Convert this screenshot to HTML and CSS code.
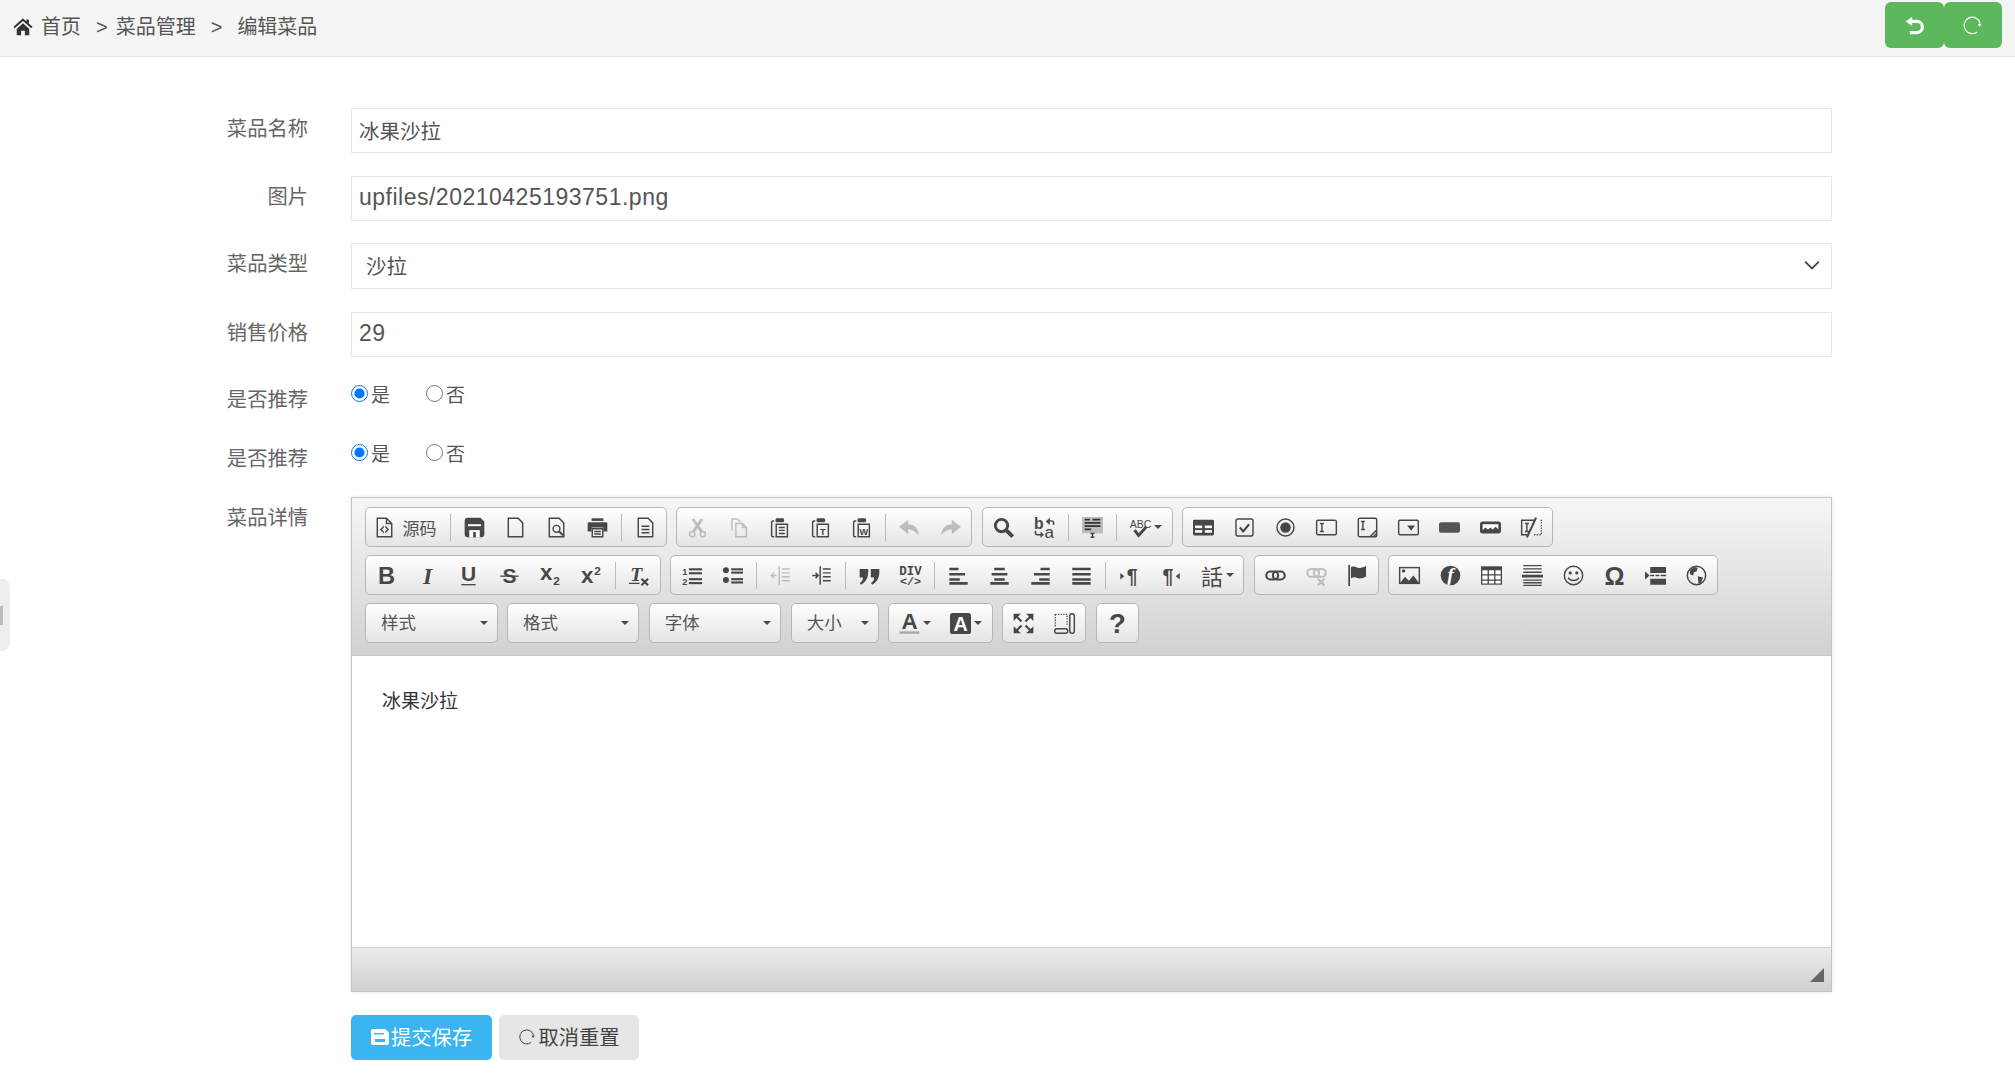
FILE: index.html
```html
<!DOCTYPE html>
<html lang="zh-CN">
<head>
<meta charset="utf-8">
<title>编辑菜品</title>
<link rel="stylesheet" href="styles.css">
</head>
<body>
<header class="topbar">
  <nav class="crumbs">
    <svg class="home" viewBox="0 0 16 16"><path d="M8 1L.4 7.800l1 1.100L8 3.100l6.600 5.800 1-1.100-2.900-2.600V2h-2v1.500z"/><path d="M3 9.400L8 5l5 4.400v5.100H9.500v-3.600h-3v3.600H3z"/></svg>
    <span class="c1">首页</span><span class="c2">&gt;</span><span class="c3">菜品管理</span><span class="c2">&gt;</span><span class="c2">编辑菜品</span>
  </nav>
  <div class="topbtns">
    <button class="gbtn" type="button"><svg class="gico" viewBox="0 0 18 18"><path d="M7 1.500L1.500 5.500 7 9.500z"/><path class="ws" d="M5 5.500h6a4.800 4.800 0 010 9.600H5"/></svg></button>
    <button class="gbtn" type="button"><svg class="gico" viewBox="0 0 18 18"><path class="wt" d="M15.500 7A7 7 0 1013 14.500"/><path d="M13.500 7.500h3.500L15 10z"/></svg></button>
  </div>
</header>

<button class="handle" type="button" aria-label="toggle"></button>

<form class="form">
  <div class="row"><label class="lab">菜品名称</label><div class="field"><input class="inp" value="冰果沙拉"></div></div>
  <div class="row"><label class="lab">图片</label><div class="field"><input class="inp latin" value="upfiles/20210425193751.png"></div></div>
  <div class="row"><label class="lab">菜品类型</label><div class="field selwrap"><select class="inp sel"><option>沙拉</option></select><svg class="chev" viewBox="0 0 14 8"><path d="M1 1l6 6 6-6"/></svg></div></div>
  <div class="row"><label class="lab">销售价格</label><div class="field"><input class="inp latin" value="29"></div></div>
  <div class="row radio-row"><label class="lab">是否推荐</label><div class="field radios"><label class="rad"><input type="radio" name="a" checked>是</label><label class="rad"><input type="radio" name="a">否</label></div></div>
  <div class="row radio-row"><label class="lab">是否推荐</label><div class="field radios"><label class="rad"><input type="radio" name="b" checked>是</label><label class="rad"><input type="radio" name="b">否</label></div></div>
  <div class="row"><label class="lab">菜品详情</label>
    <div class="field editor">
      <div class="tools">
        <div class="trow">
          <div class="grp">
            <span class="b srcb"><svg class="ico" viewBox="0 0 16 16"><path class="s" d="M2.500 1h7l4 4v10h-11zM9.500 1v4h4"/><path d="M7.500 6.500L4.500 9.500l3 3v-1.500L6 9.500 7.500 8zm1 0v1.500L10 9.500 8.500 11v1.500l3-3z"/></svg><span class="blabel">源码</span></span>
            <i class="sep"></i>
            <span class="b"><svg class="ico" viewBox="0 0 16 16"><path d="M2.500 .5h10L15.500 3.500V13a2.500 2.500 0 01-2.500 2.500H3A2.500 2.500 0 01.5 13V3A2.500 2.500 0 013 .5z"/><rect class="w" x="3" y="5.500" width="10" height="1.500"/><rect class="w" x="4" y="10" width="8" height="5.500"/><rect x="7" y="11.500" width="2" height="4"/></svg></span>
            <span class="b"><svg class="ico" viewBox="0 0 16 16"><path class="s" d="M2.500 1h7.500l3.500 3.500V15h-11z"/></svg></span>
            <span class="b"><svg class="ico" viewBox="0 0 16 16"><path class="s" d="M2.500 1h7.500l3.500 3.500V15h-11z"/><circle class="s" cx="8" cy="9" r="2.600"/><path class="s2" d="M10 11l3 3"/></svg></span>
            <span class="b"><svg class="ico" viewBox="0 0 16 16"><rect x="3.500" y="1" width="9" height="2"/><path d="M1.500 4h13a1 1 0 011 1v6h-3V8h-9v3h-3V5a1 1 0 011-1z"/><path class="s" d="M4 9h8v6H4zM5.500 11h5M5.500 13h5"/></svg></span>
            <i class="sep"></i>
            <span class="b"><svg class="ico" viewBox="0 0 16 16"><path class="s" d="M2.500 1h7.500l3.500 3.500V15h-11zM5 7h6M5 9.500h6M5 12h6"/></svg></span>
          </div>
          <div class="grp">
            <span class="b dis"><svg class="ico" viewBox="0 0 16 16"><circle class="s" cx="4" cy="13" r="2"/><circle class="s" cx="12" cy="13" r="2"/><path class="s3" d="M5 11L11.500 1.500M11 11L4.500 1.500"/></svg></span>
            <span class="b dis"><svg class="ico" viewBox="0 0 16 16"><path class="s" d="M3 10.500V1.500h4l2.500 2.500M6 5h5l3 3v7H6zM11 5v3h3"/></svg></span>
            <span class="b"><svg class="ico" viewBox="0 0 16 16"><path class="s" d="M4 3H3a1 1 0 00-1 1v10a1 1 0 001 1h1M5.500 5.500h8.500V15H5.500zM7.500 8h4.500M7.500 10.200h4.500M7.500 12.500h4.500"/><rect x="5" y="1" width="6.500" height="3" rx="1"/></svg></span>
            <span class="b"><svg class="ico" viewBox="0 0 16 16"><path class="s" d="M4 3H3a1 1 0 00-1 1v10a1 1 0 001 1h1M5.500 5.500h8.500V15H5.500z"/><rect x="5" y="1" width="6.500" height="3" rx="1"/><text x="9.700" y="13.500" class="t7">T</text></svg></span>
            <span class="b"><svg class="ico" viewBox="0 0 16 16"><path class="s" d="M4 3H3a1 1 0 00-1 1v10a1 1 0 001 1h1M5.500 5.500h8.500V15H5.500z"/><rect x="5" y="1" width="6.500" height="3" rx="1"/><text x="9.700" y="13.500" class="t7">W</text></svg></span>
            <i class="sep"></i>
            <span class="b dis"><svg class="ico" viewBox="0 0 16 16"><path d="M7 2L0 7.500 7 13V9.500c3 0 5.500 1 8 4.500C15 9 11.500 5.500 7 5.500z"/></svg></span>
            <span class="b dis"><svg class="ico" viewBox="0 0 16 16"><path d="M9 2l7 5.500L9 13V9.500c-3 0-5.500 1-8 4.500C1 9 4.500 5.500 9 5.500z"/></svg></span>
          </div>
          <div class="grp">
            <span class="b"><svg class="ico" viewBox="0 0 16 16"><circle class="s3" cx="6.500" cy="6.500" r="4.700"/><path class="s4" d="M10 10l5 5"/></svg></span>
            <span class="b"><svg class="ico" viewBox="0 0 16 16"><text x="0" y="9" class="t9">b</text><text x="8" y="16" class="t10">a</text><path d="M9 3.500L12 .5V2.500h1.500a2 2 0 012 2V6h-1.200V4.500a1 1 0 00-1-1H12v2.500zM.5 10.500h1.200V12a1 1 0 001 1H5v-2l2.500 2.500L5 16v-2H2.500a2 2 0 01-2-2z"/></svg></span>
            <i class="sep"></i>
            <span class="b"><svg class="ico" viewBox="0 0 16 16"><rect class="gray" x="0" y="0" width="16" height="12.500"/><path class="s4b" d="M2 2h4M2 4.500h12M2 7h12M2 9.500h5M8 2h6"/><path class="s" d="M6.500 12.500h3M8 12.500v3M6.500 15.500h3"/></svg></span>
            <i class="sep"></i>
            <span class="b wide"><svg class="ico" viewBox="0 0 16 16"><text x="8" y="8" class="t7m">ABC</text><path class="s3" d="M3.500 10l3 4L12.500 7.500"/></svg><i class="arr"></i></span>
          </div>
          <div class="grp">
            <span class="b"><svg class="ico" viewBox="0 0 16 16"><rect x="0" y="2" width="16" height="12" rx="1"/><rect class="w" x="1.500" y="6.500" width="5.500" height="2"/><rect class="w" x="9" y="6.500" width="5.500" height="2"/><rect class="w" x="1.500" y="10" width="5.500" height="2"/><rect class="w" x="9" y="10" width="5.500" height="2"/></svg></span>
            <span class="b"><svg class="ico" viewBox="0 0 16 16"><rect class="s" x="1.500" y="1.500" width="13" height="13" rx="1.500"/><path class="s2" d="M4.500 8l2.500 3 4.500-5.500"/></svg></span>
            <span class="b"><svg class="ico" viewBox="0 0 16 16"><circle class="s" cx="8" cy="8" r="6.500"/><circle cx="8" cy="8" r="4"/></svg></span>
            <span class="b"><svg class="ico" viewBox="0 0 16 16"><rect class="s" x=".5" y="2.500" width="15" height="11" rx="1"/><path class="s" d="M3 5h3M4.500 5v6M3 11h3"/></svg></span>
            <span class="b"><svg class="ico" viewBox="0 0 16 16"><rect class="s" x="1" y="1" width="14" height="14" rx="1"/><path class="s" d="M3 3.500h3M4.500 3.500v6M3 9.500h3M15 10l-5 5M15 12.500L12.500 15"/></svg></span>
            <span class="b"><svg class="ico" viewBox="0 0 16 16"><rect class="s" x=".5" y="2.500" width="15" height="11" rx="1"/><path d="M7 6.500h6L10 10.500z"/></svg></span>
            <span class="b"><svg class="ico" viewBox="0 0 16 16"><rect class="mid" x="0" y="4" width="16" height="8" rx="1.500"/></svg></span>
            <span class="b"><svg class="ico" viewBox="0 0 16 16"><rect x="0" y="3.500" width="16" height="9" rx="2"/><path class="w" d="M2 5.500h12v4l-2-2-2.500 2-1.500-1.500-2 1.500L4 8 2 10z"/></svg></span>
            <span class="b"><svg class="ico" viewBox="0 0 16 16"><path class="s" d="M10 2.500H.5v11h5M3 5h3M4.500 5v6M3 11h3"/><path class="s2" d="M11.500 .5L4.500 15.500"/><path class="dot" d="M15.500 2v11.500H10"/></svg></span>
          </div>
        </div>
        <div class="trow">
          <div class="grp">
            <span class="b"><svg class="ico" viewBox="0 0 16 16"><text x="8" y="14.500" class="tb">B</text></svg></span>
            <span class="b"><svg class="ico" viewBox="0 0 16 16"><text x="8" y="14.500" class="ti">I</text></svg></span>
            <span class="b"><svg class="ico" viewBox="0 0 16 16"><text x="8" y="12.500" class="tu">U</text><rect x="2.500" y="14.500" width="11" height="1"/></svg></span>
            <span class="b"><svg class="ico" viewBox="0 0 16 16"><text x="8" y="14" class="tu">S</text><rect x="1" y="8" width="14" height="1"/></svg></span>
            <span class="b"><svg class="ico" viewBox="0 0 16 16"><text x="0" y="11.500" class="tx">x</text><text x="10" y="15.500" class="t6">2</text></svg></span>
            <span class="b"><svg class="ico" viewBox="0 0 16 16"><text x="0" y="14" class="tx">x</text><text x="10" y="7.500" class="t6">2</text></svg></span>
            <i class="sep"></i>
            <span class="b"><svg class="ico" viewBox="0 0 16 16"><text x="1" y="12" class="tt">T</text><rect x="0" y="13.500" width="8" height="1"/><path class="s2" d="M9.500 10.500l5 5M14.500 10.500l-5 5"/></svg></span>
          </div>
          <div class="grp">
            <span class="b"><svg class="ico" viewBox="0 0 16 16"><text x="1" y="7.500" class="t6s">1</text><text x="1" y="15" class="t6s">2</text><rect x="6" y="2.500" width="10" height="1.600"/><rect x="6" y="5.500" width="10" height="1.600"/><rect x="6" y="10" width="10" height="1.600"/><rect x="6" y="13" width="10" height="1.600"/></svg></span>
            <span class="b"><svg class="ico" viewBox="0 0 16 16"><circle cx="3" cy="4" r="2.300"/><circle cx="3" cy="11.500" r="2.300"/><rect x="7" y="2.500" width="9" height="1.600"/><rect x="7" y="5" width="9" height="1.600"/><rect x="7" y="10" width="9" height="1.600"/><rect x="7" y="12.500" width="9" height="1.600"/></svg></span>
            <i class="sep"></i>
            <span class="b dis"><svg class="ico" viewBox="0 0 16 16"><path class="s" d="M7 1v14M9 3h6M9 6h6M9 9h6M9 12h6M5 8H1M3 6L1 8l2 2"/></svg></span>
            <span class="b"><svg class="ico" viewBox="0 0 16 16"><path class="s" d="M7 1v14M9 3h6M9 6h6M9 9h6M9 12h6M1 8h4M3.500 6l2 2-2 2"/></svg></span>
            <i class="sep"></i>
            <span class="b"><svg class="ico" viewBox="0 0 16 16"><path d="M7 5.500c0 4.500-2 7.500-5.500 9.500l-.8-1.200C2.500 12.500 3 11 3 9.500H.5V3H7zM15.500 5.500c0 4.500-2 7.500-5.500 9.500l-.8-1.200c1.800-1.300 2.300-2.800 2.300-4.300H9V3h6.500z"/></svg></span>
            <span class="b"><svg class="ico" viewBox="0 0 16 16"><text x="8" y="7.500" class="tm7">DIV</text><text x="8" y="15.500" class="tm7b">&lt;/&gt;</text></svg></span>
            <i class="sep"></i>
            <span class="b"><svg class="ico" viewBox="0 0 16 16"><path d="M1 2h7v2H1zM1 6h12v2H1zM1 10h8v2H1zM1 13h14v2H1z"/></svg></span>
            <span class="b"><svg class="ico" viewBox="0 0 16 16"><path d="M4 2h8v2H4zM2 6h12v2H2zM4 10h8v2H4zM1 13h14v2H1z"/></svg></span>
            <span class="b"><svg class="ico" viewBox="0 0 16 16"><path d="M8 2h7v2H8zM3 6h12v2H3zM7 10h8v2H7zM1 13h14v2H1z"/></svg></span>
            <span class="b"><svg class="ico" viewBox="0 0 16 16"><path d="M1 2h14v2H1zM1 6h14v2H1zM1 10h14v2H1zM1 13h14v2H1z"/></svg></span>
            <i class="sep"></i>
            <span class="b"><svg class="ico" viewBox="0 0 16 16"><path d="M1 6l3 2.500L1 11z"/><text x="10" y="14" class="tp">¶</text></svg></span>
            <span class="b"><svg class="ico" viewBox="0 0 16 16"><path d="M15 6l-3 2.500 3 2.500z"/><text x="6" y="14" class="tp">¶</text></svg></span>
            <span class="b wide"><span class="lang">話</span><i class="arr"></i></span>
          </div>
          <div class="grp">
            <span class="b"><svg class="ico" viewBox="0 0 16 16"><rect class="s2" x="1" y="5" width="9" height="6" rx="3"/><rect class="s2" x="6" y="5" width="9" height="6" rx="3"/></svg></span>
            <span class="b dis"><svg class="ico" viewBox="0 0 16 16"><rect class="s2" x="1" y="3" width="9" height="6" rx="3"/><rect class="s2" x="6" y="3" width="9" height="6" rx="3"/><path class="s2" d="M9 10.500l5 5M14 10.500l-5 5"/></svg></span>
            <span class="b"><svg class="ico" viewBox="0 0 16 16"><rect x="1" y="0" width="1.300" height="16"/><path d="M3 1.500c3-1.200 4.500 1 6.500.7 2-.2 3.500-.7 5-1.500v8c-1.500 1-3 1.500-5 1.500S6 8.500 3 10z"/></svg></span>
          </div>
          <div class="grp">
            <span class="b"><svg class="ico" viewBox="0 0 16 16"><rect class="s" x=".5" y="2" width="15" height="12"/><circle cx="3.500" cy="4.500" r="1.300"/><path d="M.5 14l4-5 3 3 3.500-4 4.500 6z"/></svg></span>
            <span class="b"><svg class="ico" viewBox="0 0 16 16"><circle cx="8" cy="8" r="7.500"/><text x="8" y="12.500" class="tf">f</text></svg></span>
            <span class="b"><svg class="ico" viewBox="0 0 16 16"><rect x="0" y="1" width="16" height="14"/><path class="w" d="M1 4h4v3H1zM6 4h4v3H6zM11 4h4v3h-4zM1 8h4v3H1zM6 8h4v3H6zM11 8h4v3h-4zM1 12h4v2H1zM6 12h4v2H6zM11 12h4v2h-4z"/></svg></span>
            <span class="b"><svg class="ico" viewBox="0 0 16 16"><path d="M1 0h14v1H1zM1 2.500h14v1H1zM1 5h14v1H1zM0 7.500h16v2H0zM1 11h14v1H1zM1 13h14v1H1zM1 15h14v1H1z"/></svg></span>
            <span class="b"><svg class="ico" viewBox="0 0 16 16"><circle class="s" cx="8" cy="8" r="7"/><circle cx="5.500" cy="6" r="1.200"/><circle cx="10.500" cy="6" r="1.200"/><path class="s" d="M4 9.500c1 3 7 3 8 0"/></svg></span>
            <span class="b"><svg class="ico" viewBox="0 0 16 16"><text x="8" y="15" class="tom">Ω</text></svg></span>
            <span class="b"><svg class="ico" viewBox="0 0 16 16"><path d="M0 5l3.500 3L0 11zM4 1.500h12V6H4zM4 10.500h12V15H4zM4 7.500h3v1H4zM8 7.500h3v1H8zM12 7.500h4v1h-4z"/></svg></span>
            <span class="b"><svg class="ico" viewBox="0 0 16 16"><circle class="s" cx="8" cy="8" r="7"/><path d="M3 4l3-2.500 3 .5-1 3-2 .5-.5 2.500L3 7zM9 8.500l4 1-1.500 4L9.500 14z"/></svg></span>
          </div>
        </div>
        <div class="trow">
          <div class="combo"><span>样式</span><i class="arr"></i></div>
          <div class="combo"><span>格式</span><i class="arr"></i></div>
          <div class="combo"><span>字体</span><i class="arr"></i></div>
          <div class="combo small"><span>大小</span><i class="arr"></i></div>
          <div class="grp">
            <span class="b half"><svg class="ico" viewBox="0 0 16 16"><text x="8" y="12.500" class="tc">A</text><rect class="gray2" x=".5" y="14" width="15" height="1.800"/></svg><i class="arr"></i></span>
            <span class="b half"><svg class="ico" viewBox="0 0 16 16"><rect x="0" y="0" width="16" height="16" rx="2"/><text x="8" y="13.500" class="tcw">A</text></svg><i class="arr"></i></span>
          </div>
          <div class="grp">
            <span class="b"><svg class="ico" viewBox="0 0 16 16"><path d="M.5 .5H6L.5 6zM15.500 .5V6L10 .5zM.5 15.500V10L6 15.500zM15.500 15.500H10L15.500 10z"/><path class="s2" d="M2.500 2.500L6.500 6.500M13.500 2.500L9.500 6.500M2.500 13.500L6.500 9.500M13.500 13.500L9.500 9.500"/></svg></span>
            <span class="b"><svg class="ico" viewBox="0 0 16 16"><path class="dot" d="M1 1h9v9"/><path class="dot" d="M1 1v10"/><rect class="s" x=".5" y="12" width="10" height="3.500" rx="1.700"/><rect class="s" x="12" y=".5" width="3.500" height="15" rx="1.700"/></svg></span>
          </div>
          <div class="grp"><span class="b"><svg class="ico" viewBox="0 0 16 16"><text x="8" y="15" class="tq">?</text></svg></span></div>
        </div>
      </div>
      <div class="content"><p class="ptext">冰果沙拉</p></div>
      <div class="foot"><i class="resize"></i></div>
    </div>
  </div>
  <div class="row actions">
    <span class="lab"></span>
    <div class="field btns">
      <button class="act primary" type="button"><svg class="aico" viewBox="0 0 18 16"><path class="wf" fill-rule="evenodd" d="M2 0h12l4 3.500V14a2 2 0 01-2 2H2a2 2 0 01-2-2V2a2 2 0 012-2zM3 4v1.500h10V4zM4 10v3h10v-3z"/></svg>提交保存</button>
      <button class="act ghost" type="button"><svg class="aico2" viewBox="0 0 18 18"><path class="rs" d="M15.500 7A7 7 0 1013 14.500"/><path class="rf" d="M13.500 7.500h3.500L15 10z"/></svg>取消重置</button>
    </div>
  </div>
</form>
</body>
</html>
```
FILE: styles.css
```css
* { box-sizing: border-box; }
html, body { margin: 0; padding: 0; background: #fff; }
body { font-family: "Noto Sans CJK SC", "Liberation Sans", sans-serif; font-size: 20px; color: #555; overflow: hidden; height: 1080px; }

.topbar { display: flex; justify-content: space-between; align-items: flex-start; height: 57px; background: #f5f5f5; border-bottom: 1px solid #e6e6e6; padding: 2px 13px 0 13px; }
.crumbs { display: flex; align-items: center; height: 49px; font-size: 20px; color: #555; line-height: 1; }
.crumbs span { font-family: "Liberation Sans", "Noto Sans CJK SC", sans-serif; }
.home { width: 20px; height: 20px; fill: #333; margin-right: 8px; }
.c1 { margin-right: 15px; }
.c2 { margin-right: 8px; }
.c3 { margin-right: 15px; }
.c3 + .c2 { margin-right: 15px; }
.topbtns { display: flex; }
.gbtn { width: 58.500px; height: 46px; border: 0; border-radius: 6px; background: #5cb85c; display: flex; align-items: center; justify-content: center; padding: 0; }
.gico { width: 21px; height: 21px; fill: #fff; }
.ws { fill: none; stroke: #fff; stroke-width: 2.700; }
.wt { fill: none; stroke: #fff; stroke-width: 1; }

.handle { position: absolute; left: 0; top: 579px; width: 10px; height: 72px; background: #eee; border: 0; border-radius: 0 8px 8px 0; padding: 0; }
.handle::before { content: ""; position: absolute; left: 0; top: 27px; width: 3px; height: 19px; background: #bbb; }

.form { padding: 51px 183px 0 0; }
.row { display: flex; gap: 43px; margin-bottom: 22.500px; }
.radio-row { height: 36.500px; }
.lab { flex: 0 0 308px; text-align: right; font-size: 20.300px; line-height: 38px; color: #666; }
.field { flex: 1; min-width: 0; }
.inp { display: block; width: 100%; height: 45px; border: 1px solid #e6e6e6; background: #fff; padding: 0 7px 2px; font-family: "Noto Sans CJK SC", sans-serif; font-size: 20.500px; color: #555; outline: none; border-radius: 0; }
.latin { font-family: "Liberation Sans", sans-serif; font-size: 23px; letter-spacing: .5px; }
.selwrap { position: relative; }
.sel { height: 46px; appearance: none; -webkit-appearance: none; padding-left: 14px; }
.chev { position: absolute; right: 12px; top: 17px; width: 16px; height: 10px; fill: none; stroke: #444; stroke-width: 1.500; }
.radios { display: flex; gap: 36px; height: 28px; align-items: center; }
.rad { display: flex; align-items: center; font-size: 19px; color: #555; gap: 3px; }
.rad input { width: 17px; height: 17px; margin: 0; }

.editor { border: 1px solid #c4c4c4; height: 495px; display: flex; flex-direction: column; box-shadow: 0 0 4px rgba(0,0,0,.1); }
.tools { height: 158px; flex: none; background: linear-gradient(#f6f6f6, #d0d2d0); border-bottom: 1px solid #c8c8c8; padding: 9px 0 0 13px; display: flex; flex-direction: column; gap: 8px; }
.trow { display: flex; gap: 9.400px; height: 40px; }
.grp { display: flex; align-items: center; height: 40px; border: 1px solid #b6b6b6; border-radius: 5px; background: linear-gradient(#fff, #e4e4e4); }
.b { width: 41px; height: 38px; display: flex; align-items: center; justify-content: center; gap: 3px; flex: none; }
.srcb { width: 81px; gap: 8px; padding-right: 3px; }
.blabel { font-size: 17px; color: #555; }
.wide { width: 52px; }
.half { width: 51.500px; }
.sep { width: 7px; height: 27px; flex: none; background: linear-gradient(#bcbcbc, #bcbcbc) center / 1px 100% no-repeat; }
.dis { opacity: .3; }
.ico { width: 21px; height: 21px; fill: #474747; flex: none; overflow: visible; }
.s { fill: none; stroke: #474747; stroke-width: 1.100; }
.s2 { fill: none; stroke: #474747; stroke-width: 1.600; }
.s3 { fill: none; stroke: #474747; stroke-width: 2.200; }
.s4 { fill: none; stroke: #474747; stroke-width: 3; }
.s4b { fill: none; stroke: #333; stroke-width: 1.300; }
.w { fill: #fff; }
.mid { fill: #555; }
.gray { fill: #bdbdbd; }
.gray2 { fill: #a8a8a8; }
.dot { fill: none; stroke: #474747; stroke-width: 1; stroke-dasharray: 1 1; }
.arr { width: 0; height: 0; flex: none; border-left: 4.500px solid transparent; border-right: 4.500px solid transparent; border-top: 4.500px solid #474747; }
.combo { display: flex; align-items: center; justify-content: space-between; width: 132.500px; height: 40px; border: 1px solid #b6b6b6; border-radius: 5px; background: linear-gradient(#fff, #e4e4e4); padding: 0 9px 3px 15px; font-size: 17.500px; color: #555; }
.combo .arr { margin-top: 3px; }
.small { width: 88px; }
.lang { font-size: 22px; line-height: 1; color: #474747; }

.ico text { font-family: "Liberation Sans", sans-serif; fill: #474747; }
.tb { font-size: 18px; font-weight: 700; text-anchor: middle; }
.ti { font-family: "Liberation Serif", serif !important; font-size: 18px; font-weight: 700; font-style: italic; text-anchor: middle; }
.tu { font-size: 16px; font-weight: 700; text-anchor: middle; }
.tx { font-size: 17px; font-weight: 700; }
.t6 { font-size: 9px; font-weight: 700; }
.t6s { font-size: 7px; font-weight: 700; }
.t7 { font-size: 7px; font-weight: 700; text-anchor: middle; }
.t7m { font-size: 8px; font-weight: 400; text-anchor: middle; }
.t9 { font-size: 12px; font-weight: 700; }
.t10 { font-size: 13px; }
.tt { font-family: "Liberation Serif", serif !important; font-size: 15px; font-weight: 700; font-style: italic; }
.tm7 { font-family: "Liberation Mono", monospace !important; font-size: 9.500px; font-weight: 700; text-anchor: middle; }
.tm7b { font-family: "Liberation Mono", monospace !important; font-size: 9px; font-weight: 700; text-anchor: middle; }
.tp { font-size: 15px; font-weight: 700; text-anchor: middle; }
.tf { font-family: "Liberation Serif", serif !important; font-size: 15px; font-style: italic; font-weight: 700; text-anchor: middle; fill: #fff !important; }
.tc { font-size: 17px; font-weight: 700; text-anchor: middle; }
.tcw { font-size: 15px; font-weight: 700; text-anchor: middle; fill: #fff !important; }
.tq { font-size: 21px; font-weight: 700; text-anchor: middle; }
.tom { font-size: 19px; font-weight: 700; text-anchor: middle; }

.content { flex: 1; background: #fff; padding: 0 30px; }
.ptext { margin: 30px 0 0; font-size: 19px; line-height: 28px; color: #333; }
.foot { position: relative; height: 44px; flex: none; background: linear-gradient(#ebebeb, #cfd1cf); border-top: 1px solid #d0d0d0; }
.resize { position: absolute; right: 7px; bottom: 9px; width: 0; height: 0; border-left: 14px solid transparent; border-bottom: 14px solid #666; }

.actions { margin-bottom: 0; }
.btns { display: flex; gap: 7px; }
.act { height: 45px; width: 141px; border: 0; border-radius: 5px; font-family: "Noto Sans CJK SC", sans-serif; font-size: 20.300px; display: flex; align-items: center; justify-content: center; gap: 2px; padding: 0 0 2px; }
.primary { background: #3bb4f2; color: #fff; }
.ghost { background: #e6e6e6; color: #444; width: 140px; }
.aico { width: 18px; height: 16px; margin-top: 2px; }
.wf { fill: #fff; }
.aico2 { width: 18px; height: 18px; margin-top: 2px; }
.rs { fill: none; stroke: #444; stroke-width: 1; }
.rf { fill: #444; }
```
